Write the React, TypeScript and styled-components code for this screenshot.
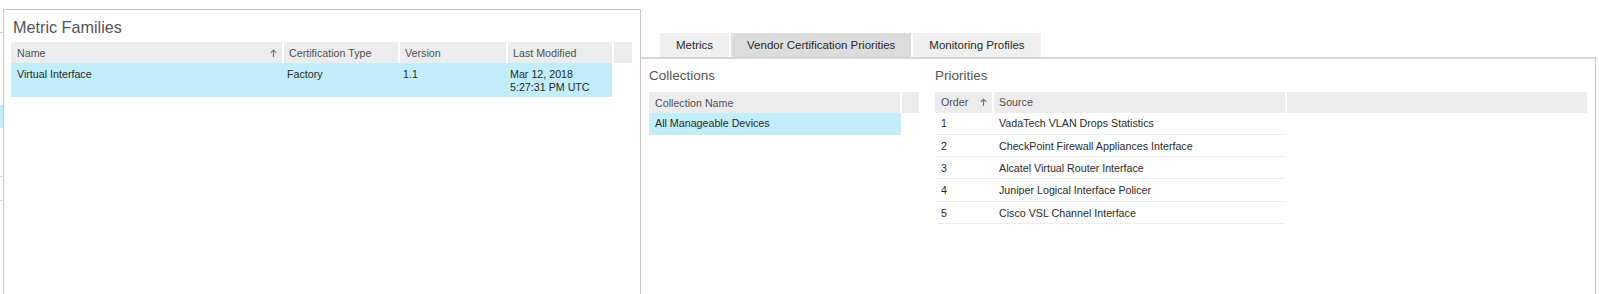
import React from 'react';
import styled, {createGlobalStyle} from "styled-components";

const GlobalStyle = createGlobalStyle`
    html, body {
        margin:0;
        padding:0;
        background:#fff;
    }
    body {
        font-family: "Liberation Sans", Arial, sans-serif;
        color:#333;
    }
`;

const Page = styled.div`
    display:flex;
    width:1599px;
    height:294px;
    overflow:hidden;
    background:#fff;
`;

// leftovers of the panel that sits behind, only 3px visible
const EdgeStrip = styled.div`
    width:3px;
    display:flex;
    flex-direction:column;
`;

const EdgeMark = styled.div<{$gap: number; $h: number; $color: string}>`
    margin-top:${({$gap}) => $gap}px;
    height:${({$h}) => $h}px;
    background:${({$color}) => $color};
`;

const FamiliesPanel = styled.section`
    margin-top:9px;
    width:638px;
    box-sizing:border-box;
    border:1px solid #c6c6c6;
    border-bottom:none;
    padding:7px 7px 0;
`;

const PanelTitle = styled.h2`
    margin:0 0 5px;
    padding-left:2px;
    font-size:16.2px;
    line-height:20px;
    font-weight:normal;
    color:#555;
`;

const SectionTitle = styled.h3`
    margin:0 0 7px;
    font-size:13.5px;
    line-height:18px;
    font-weight:normal;
    color:#555;
`;

const HeadRow = styled.div<{$cols: string; $h: number}>`
    display:grid;
    grid-template-columns:${({$cols}) => $cols};
    column-gap:2px;
    height:${({$h}) => $h}px;
    background:#fff;
`;

const HeadCell = styled.div<{$pad?: number}>`
    display:flex;
    align-items:center;
    justify-content:space-between;
    padding:0 5px 0 ${({$pad}) => $pad ?? 5}px;
    background:#ececec;
    font-size:10.7px;
    color:#505050;
    white-space:nowrap;
    overflow:hidden;
`;

const BodyRow = styled.div<{$cols: string; $h: number; $selected?: boolean}>`
    display:grid;
    grid-template-columns:${({$cols}) => $cols};
    height:${({$h}) => $h}px;
    box-sizing:border-box;
    background:${({$selected}) => $selected ? "#c1eefa" : "#fff"};
    border-bottom:1px solid ${({$selected}) => $selected ? "#c1eefa" : "#ededed"};
`;

const BodyCell = styled.div<{$pad?: number; $top?: boolean; $shift?: number}>`
    display:flex;
    align-items:${({$top}) => $top ? "flex-start" : "center"};
    padding:${({$top, $shift}) => $top ? "4.5px" : `${$shift ?? 0}px`} 4px 0 ${({$pad}) => $pad ?? 4}px;
    font-size:10.7px;
    line-height:13.5px;
    color:#2a2a2a;
    white-space:nowrap;
`;

const Workspace = styled.div`
    flex:1;
    display:flex;
    flex-direction:column;
    padding-top:33px;
    margin-right:3px;
`;

const TabBar = styled.div`
    display:flex;
    gap:2px;
    padding-left:19px;
`;

const Tab = styled.button<{$active?: boolean}>`
    height:24px;
    padding:0 16px;
    border:none;
    margin:0;
    background:${({$active}) => $active ? "#dcdcdc" : "#efefef"};
    font-family:inherit;
    font-size:11.5px;
    color:#2a2a2a;
    cursor:pointer;
`;

const TabPanel = styled.div`
    flex:1;
    display:flex;
    gap:16px;
    border-top:2px solid #d6d6d6;
    border-right:1px solid #c6c6c6;
    padding:8px 8px 0 8px;
`;

const Collections = styled.div`
    width:270px;
`;

const Priorities = styled.div`
    flex:1;
`;

const SortArrow = () => (
    <svg width="7" height="8" viewBox="0 0 7 8">
        <path d="M3.5 8V1.2M0.8 3.9L3.5 1.2L6.2 3.9" stroke="#777" strokeWidth="1.2" fill="none"/>
    </svg>
);

const familyHead = "271px 114px 106px 104px 18px";
const familyBody = "273px 116px 108px 104px";

const priorities = [
    "VadaTech VLAN Drops Statistics",
    "CheckPoint Firewall Appliances Interface",
    "Alcatel Virtual Router Interface",
    "Juniper Logical Interface Policer",
    "Cisco VSL Channel Interface",
];

const App = () => {
    return (
        <>
            <GlobalStyle/>
            <Page>
                <EdgeStrip>
                    <EdgeMark $gap={32} $h={1} $color={"#cfcfcf"}/>
                    <EdgeMark $gap={72} $h={23} $color={"#c1eefa"}/>
                    <EdgeMark $gap={48} $h={1} $color={"#dcdcdc"}/>
                    <EdgeMark $gap={23} $h={1} $color={"#dcdcdc"}/>
                </EdgeStrip>
                <FamiliesPanel>
                    <PanelTitle>Metric Families</PanelTitle>
                    <HeadRow $cols={familyHead} $h={21}>
                        <HeadCell $pad={6}>Name<SortArrow/></HeadCell>
                        <HeadCell>Certification Type</HeadCell>
                        <HeadCell>Version</HeadCell>
                        <HeadCell>Last Modified</HeadCell>
                        <HeadCell/>
                    </HeadRow>
                    <BodyRow $cols={familyBody} $h={34} $selected style={{width: 601}}>
                        <BodyCell $pad={6} $top>Virtual Interface</BodyCell>
                        <BodyCell $pad={3} $top>Factory</BodyCell>
                        <BodyCell $pad={3} $top>1.1</BodyCell>
                        <BodyCell $pad={2} $top>Mar 12, 2018<br/>5:27:31 PM UTC</BodyCell>
                    </BodyRow>
                </FamiliesPanel>
                <Workspace>
                    <TabBar>
                        <Tab>Metrics</Tab>
                        <Tab $active>Vendor Certification Priorities</Tab>
                        <Tab>Monitoring Profiles</Tab>
                    </TabBar>
                    <TabPanel>
                        <Collections>
                            <SectionTitle>Collections</SectionTitle>
                            <HeadRow $cols={"251px 17px"} $h={21}>
                                <HeadCell $pad={6}>Collection Name</HeadCell>
                                <HeadCell/>
                            </HeadRow>
                            <BodyRow $cols={"252px"} $h={21.5} $selected style={{width: 252}}>
                                <BodyCell $pad={6} $shift={1}>All Manageable Devices</BodyCell>
                            </BodyRow>
                        </Collections>
                        <Priorities>
                            <SectionTitle>Priorities</SectionTitle>
                            <HeadRow $cols={"57px 291px 1fr"} $h={20.5}>
                                <HeadCell $pad={6}>Order<SortArrow/></HeadCell>
                                <HeadCell>Source</HeadCell>
                                <HeadCell/>
                            </HeadRow>
                            {priorities.map((source, i) => (
                                <BodyRow key={source} $cols={"59px 291px"} $h={22.3} style={{width: 350}}>
                                    <BodyCell $pad={6} $shift={2}>{i + 1}</BodyCell>
                                    <BodyCell $pad={5} $shift={2}>{source}</BodyCell>
                                </BodyRow>
                            ))}
                        </Priorities>
                    </TabPanel>
                </Workspace>
            </Page>
        </>
    );
};

export default App;
